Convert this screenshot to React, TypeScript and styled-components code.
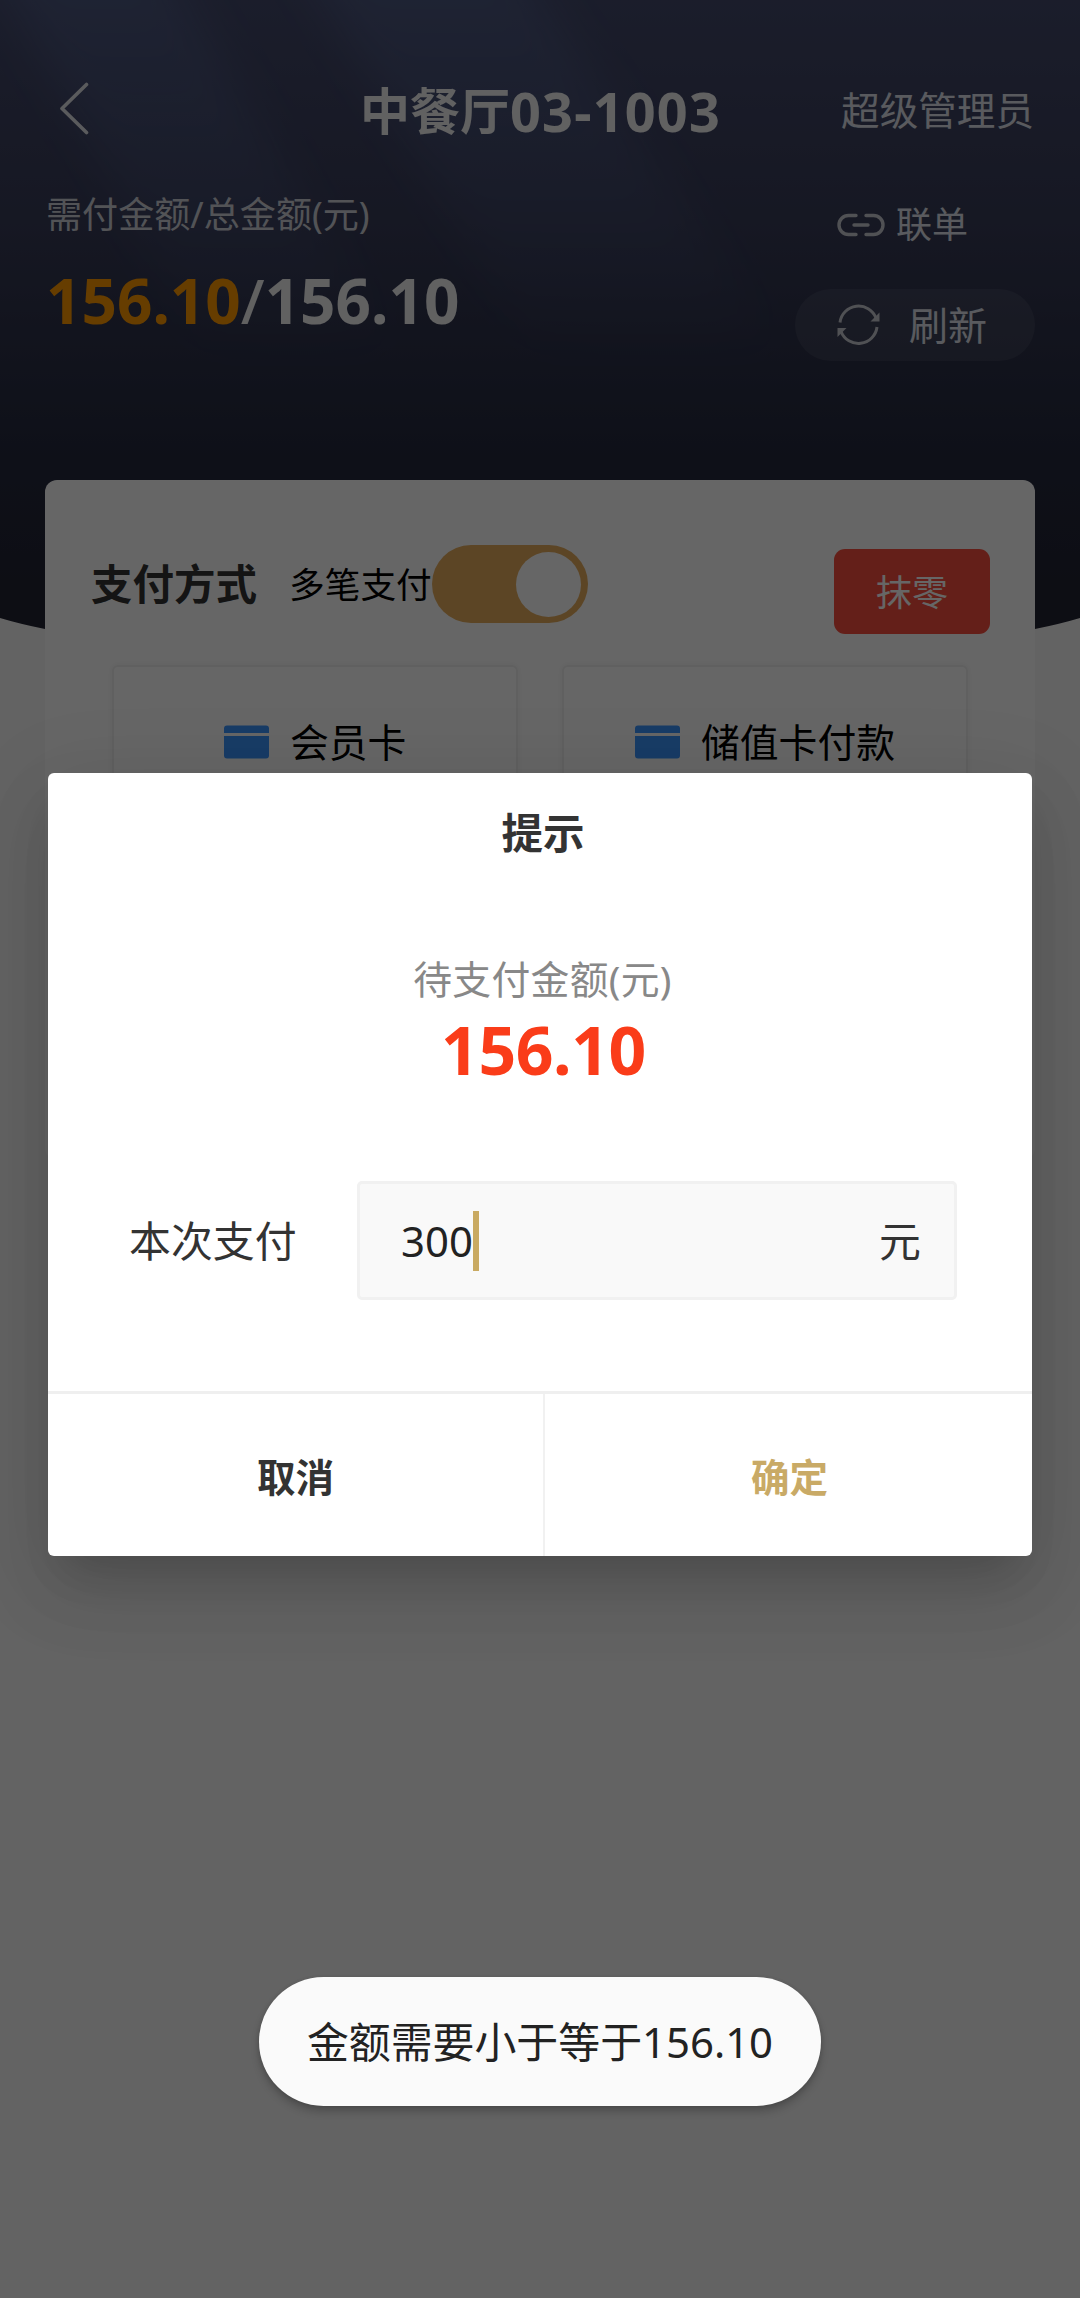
import React from 'react';
import styled, { createGlobalStyle } from 'styled-components';

const GlobalStyle = createGlobalStyle`
  *, *::before, *::after { box-sizing: border-box; }
  html, body { margin: 0; padding: 0; background: #f6f6f6; }
  body { font-family: "Noto Sans", "Noto Sans CJK SC", sans-serif; color: #333; }
  button { font-family: inherit; border: 0; padding: 0; background: none; }
`;

const Page = styled.div`
  position: relative;
  width: 1080px;
  height: 2298px;
  overflow: hidden;
  background: #f7f7f7;
`;

const Header = styled.header`
  position: relative;
  height: 660px;
`;

const HeaderArt = styled.svg`
  position: absolute;
  inset: 0;
  display: block;
`;

const HeaderContent = styled.div`
  position: relative;
  display: flex;
  flex-direction: column;
`;

const NavBar = styled.div`
  display: grid;
  grid-template-columns: 300px 1fr 300px;
  align-items: center;
  height: 60px;
  margin-top: 81px;
  padding: 0 46px 0 59px;
`;

const BackButton = styled.button`
  display: flex;
  justify-self: start;
  margin-top: -6px;
`;

const Title = styled.h1`
  display: flex;
  justify-content: center;
  margin: -1px 0 0 -12px;
  font-size: 50px;
  font-weight: 700;
  line-height: 60px;
  color: #f2f2f2;
  white-space: nowrap;
`;

const TitleDigits = styled.span`
  font-size: 54px;
  letter-spacing: 1.2px;
`;

const UserName = styled.span`
  justify-self: end;
  margin-top: -3px;
  font-size: 38.6px;
  line-height: 60px;
  color: #dfe1ea;
`;

const Summary = styled.div`
  display: flex;
  justify-content: space-between;
  padding: 47px 45px 0 46px;
`;

const Totals = styled.div`
  display: flex;
  flex-direction: column;
`;

const TotalsLabel = styled.span`
  font-size: 36.1px;
  line-height: 52px;
  color: #ced0d8;
`;

const TotalsValue = styled.span`
  margin-top: 20px;
  font-size: 62px;
  font-weight: 700;
  line-height: 80px;
  color: #f2f2f2;
`;

const Due = styled.span`
  color: #ff9900;
`;

const Slash = styled.span`
  font-weight: 500;
`;

const Actions = styled.div`
  display: flex;
  flex-direction: column;
  gap: 40px;
  width: 240px;
  padding-top: 12px;
`;

const ButtonText = styled.span`
  margin-top: -4px;
`;

const LinkButton = styled.button`
  display: flex;
  align-items: center;
  gap: 11px;
  height: 49px;
  padding-left: 42px;
  font-size: 36px;
  color: #dfe1ea;
`;

const RefreshButton = styled.button`
  display: flex;
  align-items: center;
  gap: 29px;
  height: 72px;
  padding-left: 42px;
  border-radius: 36px;
  background: rgba(255, 255, 255, 0.07);
  font-size: 39px;
  color: #dfe1ea;
`;

const PayCard = styled.section`
  position: relative;
  width: 990px;
  height: 680px;
  margin: -180px auto 0;
  padding-top: 62px;
  border-radius: 12px;
  background: #ffffff;
`;

const PayHead = styled.div`
  display: flex;
  align-items: center;
  height: 84px;
  margin: 0 45px 0 46px;
`;

const PayTitle = styled.h2`
  margin: -4px 0 0;
  font-size: 41.5px;
  font-weight: 700;
  color: #333;
`;

const MultiLabel = styled.span`
  margin: -4px 0 0 32px;
  font-size: 35.7px;
  color: #000;
`;

const Toggle = styled.div`
  display: flex;
  justify-content: flex-end;
  align-items: center;
  width: 156px;
  height: 78px;
  padding: 0 7px;
  border-radius: 39px;
  background: #e6ad5e;
`;

const Knob = styled.div`
  width: 65px;
  height: 65px;
  border-radius: 50%;
  background: #fff;
`;

const RoundButton = styled.button`
  align-self: flex-end;
  flex: none;
  width: 156px;
  height: 85px;
  margin: 0 0 -8px auto;
  padding-bottom: 3px;
  border-radius: 11px;
  background: #fa4f3f;
  color: #fff;
  font-size: 36px;
`;

const Methods = styled.div`
  display: grid;
  grid-template-columns: 1fr 1fr;
  gap: 44px;
  padding: 39px 67px 0 67px;
`;

const Method = styled.div<{ $inset: number }>`
  display: flex;
  align-items: center;
  gap: 21px;
  height: 154px;
  padding-left: ${(p) => p.$inset}px;
  border: 2px solid #efefef;
  border-radius: 6px;
  box-shadow: 0 0 6px rgba(0, 0, 0, 0.06);
  font-size: 38.8px;
  color: #000;
`;

const Mask = styled.div`
  position: absolute;
  inset: 0;
  background: rgba(0, 0, 0, 0.6);
`;

const Dialog = styled.div`
  position: absolute;
  left: 48px;
  top: 773px;
  display: flex;
  flex-direction: column;
  width: 984px;
  height: 783px;
  border-radius: 6px;
  background: #fff;
  box-shadow: 0 28px 40px -18px rgba(0, 0, 0, 0.13), 0 36px 70px 4px rgba(0, 0, 0, 0.08),
    0 20px 90px 12px rgba(0, 0, 0, 0.08);
`;

const DialogTitle = styled.h3`
  margin: 0;
  padding: 30px 0 0 6px;
  font-size: 41.5px;
  font-weight: 700;
  line-height: 60px;
  text-align: center;
`;

const DialogCaption = styled.div`
  margin-top: 86px;
  padding-left: 5px;
  font-size: 38.8px;
  letter-spacing: 0.3px;
  line-height: 60px;
  text-align: center;
  color: #888;
`;

const DialogAmount = styled.div`
  padding-left: 7px;
  font-size: 66px;
  font-weight: 700;
  letter-spacing: -0.4px;
  line-height: 80px;
  text-align: center;
  color: #fa3c19;
`;

const FieldRow = styled.label`
  display: flex;
  align-items: center;
  justify-content: space-between;
  margin-top: 92px;
  padding: 0 75px 0 81px;
  font-size: 41.9px;
`;

const Field = styled.div`
  display: flex;
  align-items: center;
  width: 600px;
  height: 119px;
  padding: 0 33px 0 41px;
  border: 3px solid #f1f1f1;
  border-radius: 5px;
  background: #f9f9f9;
`;

const FieldValue = styled.span`
  color: #222;
`;

const Caret = styled.span`
  width: 6px;
  height: 60px;
  background: #c9aa62;
`;

const Unit = styled.span`
  margin: -4px 0 0 auto;
`;

const FieldLabel = styled.span`
  margin-top: -4px;
`;

const DialogActions = styled.div`
  display: grid;
  grid-template-columns: 497px 1fr;
  flex: 1;
  margin-top: 91px;
  border-top: 3px solid #efefef;
`;

const DialogButton = styled.button<{ $primary?: boolean }>`
  padding-left: ${(p) => (p.$primary ? 2 : 0)}px;
  border-right: ${(p) => (p.$primary ? '0' : '2px solid #f1f1f1')};
  font-size: 38.5px;
  font-weight: 700;
  color: ${(p) => (p.$primary ? '#c9aa66' : '#333')};
`;

const Toast = styled.div`
  position: absolute;
  left: 259px;
  top: 1977px;
  display: flex;
  align-items: center;
  justify-content: center;
  width: 562px;
  height: 129px;
  padding-bottom: 4px;
  border-radius: 65px;
  background: #fafafa;
  box-shadow: 0 6px 8px rgba(0, 0, 0, 0.2), 0 1px 4px rgba(0, 0, 0, 0.12);
  font-size: 41.9px;
  color: #222;
  white-space: nowrap;
`;

function HeaderBackdrop() {
  return (
    <HeaderArt width="1080" height="740" viewBox="0 0 1080 740">
      <defs>
        <linearGradient id="night" x1="0" y1="0" x2="0" y2="1">
          <stop offset="0" stopColor="#444a6c" />
          <stop offset="0.3" stopColor="#383c58" />
          <stop offset="0.6" stopColor="#252a3f" />
          <stop offset="0.8" stopColor="#212333" />
          <stop offset="1" stopColor="#262632" />
        </linearGradient>
        <linearGradient id="beam" x1="0" y1="0" x2="0" y2="1">
          <stop offset="0" stopColor="#5a6c9c" stopOpacity="0.46" />
          <stop offset="0.45" stopColor="#5a6c9c" stopOpacity="0.25" />
          <stop offset="1" stopColor="#5a6c9c" stopOpacity="0" />
        </linearGradient>
        <filter id="soft" x="-30%" y="-30%" width="160%" height="160%">
          <feGaussianBlur stdDeviation="22" />
        </filter>
        <clipPath id="sky">
          <path d="M0 0H1080V618Q1060 624 1035 629Q800 680 540 680T45 629Q20 624 0 618Z" />
        </clipPath>
      </defs>
      <g clipPath="url(#sky)">
        <rect width="1080" height="740" fill="url(#night)" />
        <g fill="url(#beam)" filter="url(#soft)">
          <path d="M-20 -60L150 -60L400 360L210 360Z" />
          <path d="M290 -60L500 -60L790 360L540 360Z" />
        </g>
      </g>
    </HeaderArt>
  );
}

function BackIcon() {
  return (
    <svg width="32" height="54" viewBox="0 0 32 54" fill="none" stroke="#e2e3e8" strokeWidth="3.6" strokeLinecap="round" strokeLinejoin="round">
      <path d="M27.500 3.500L3 27.500L27.500 51.500" />
    </svg>
  );
}

function LinkIcon() {
  return (
    <svg width="48" height="24" viewBox="0 0 48 24" fill="none" stroke="#c8cad2" strokeWidth="3.4" strokeLinecap="round">
      <path d="M19 2.500H11.500a9.500 9.500 0 0 0 0 19H19" />
      <path d="M29 2.500h7.500a9.500 9.500 0 0 1 0 19H29" />
      <path d="M17 12h14" />
    </svg>
  );
}

function RefreshIcon() {
  return (
    <svg width="43" height="42" viewBox="0 0 43 42" fill="none" stroke="#c8cad2" strokeWidth="3">
      <path d="M3 18.500A18.700 18.700 0 0 1 39 14" />
      <path d="M40 23A18.700 18.700 0 0 1 4 27.500" />
      <path d="M42.500 8.500V17.500H33.500Z" fill="#c8cad2" stroke="none" />
      <path d="M0.500 33V24H9.500Z" fill="#c8cad2" stroke="none" />
    </svg>
  );
}

function CardIcon() {
  return (
    <svg width="45" height="34" viewBox="0 0 45 34" fill="#3e96ff">
      <path d="M3 0.500H42a3 3 0 0 1 3 3V8H0V3.500a3 3 0 0 1 3-3Z" />
      <path d="M0 11H45V30.500a3 3 0 0 1-3 3H3a3 3 0 0 1-3-3Z" />
    </svg>
  );
}

export default function App() {
  return (
    <Page>
      <GlobalStyle />
      <Header>
        <HeaderBackdrop />
        <HeaderContent>
          <NavBar>
            <BackButton aria-label="返回"><BackIcon /></BackButton>
            <Title>中餐厅<TitleDigits>03-1003</TitleDigits></Title>
            <UserName>超级管理员</UserName>
          </NavBar>
          <Summary>
            <Totals>
              <TotalsLabel>需付金额/总金额(元)</TotalsLabel>
              <TotalsValue><Due>156.10</Due><Slash>/</Slash>156.10</TotalsValue>
            </Totals>
            <Actions>
              <LinkButton><LinkIcon /><ButtonText>联单</ButtonText></LinkButton>
              <RefreshButton><RefreshIcon /><ButtonText>刷新</ButtonText></RefreshButton>
            </Actions>
          </Summary>
        </HeaderContent>
      </Header>
      <PayCard>
        <PayHead>
          <PayTitle>支付方式</PayTitle>
          <MultiLabel>多笔支付</MultiLabel>
          <Toggle><Knob /></Toggle>
          <RoundButton>抹零</RoundButton>
        </PayHead>
        <Methods>
          <Method $inset={110}><CardIcon /><ButtonText>会员卡</ButtonText></Method>
          <Method $inset={71}><CardIcon /><ButtonText>储值卡付款</ButtonText></Method>
        </Methods>
      </PayCard>
      <Mask />
      <Dialog role="dialog">
        <DialogTitle>提示</DialogTitle>
        <DialogCaption>待支付金额(元)</DialogCaption>
        <DialogAmount>156.10</DialogAmount>
        <FieldRow>
          <FieldLabel>本次支付</FieldLabel>
          <Field>
            <FieldValue>300</FieldValue>
            <Caret />
            <Unit>元</Unit>
          </Field>
        </FieldRow>
        <DialogActions>
          <DialogButton>取消</DialogButton>
          <DialogButton $primary>确定</DialogButton>
        </DialogActions>
      </Dialog>
      <Toast>金额需要小于等于156.10</Toast>
    </Page>
  );
}
